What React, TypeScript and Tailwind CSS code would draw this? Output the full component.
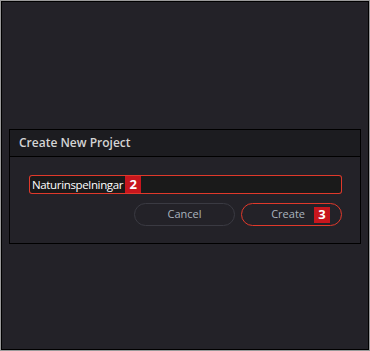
export default function App() {
  return (
    <div
      className="w-[370px] h-[351px] bg-[#9a9a9a] p-px"
      style={{ fontFamily: '"Open Sans", "Liberation Sans", sans-serif' }}
    >
      <div className="w-full h-full border border-black bg-[#232228] pt-[127px] px-[7px]">
        <div className="border border-black bg-[#232228]">
          <div className="h-[27px] bg-[#1c1c20] border-b border-black flex items-center pl-[9px]">
            <span className="text-[12px] font-semibold text-[#d4d4d4] leading-none">Create New Project</span>
          </div>
          <div className="pt-[19px] pl-[20px] pr-[19px] pb-[17px]">
            <div className="h-[17px] shadow-[0_0_0_1px_#e0392b] rounded-[2px] bg-[#1a1a1a] flex items-center pl-[2px]">
              <span className="text-[11.5px] text-white leading-none tracking-[-0.35px]">Naturinspelningar</span>
              <span className="ml-[2px] w-[16px] h-[17px] bg-[#c8161d] text-white text-[13px] font-bold flex items-center justify-center leading-none">2</span>
            </div>
            <div className="mt-[10px] -mr-px flex justify-end gap-[6px]">
              <button className="w-[101px] h-[23px] rounded-full border border-[#3a3a42] text-[11px] text-[#aab4be] flex items-center justify-center">
                Cancel
              </button>
              <button className="w-[101px] h-[23px] rounded-full border border-[#e0392b] text-[11px] text-[#aab4be] flex items-center justify-end pr-[11px] gap-[9px]">
                <span>Create</span>
                <span className="w-[16px] h-[16px] bg-[#c8161d] text-white text-[13px] font-bold flex items-center justify-center leading-none">3</span>
              </button>
            </div>
          </div>
        </div>
      </div>
    </div>
  );
}
